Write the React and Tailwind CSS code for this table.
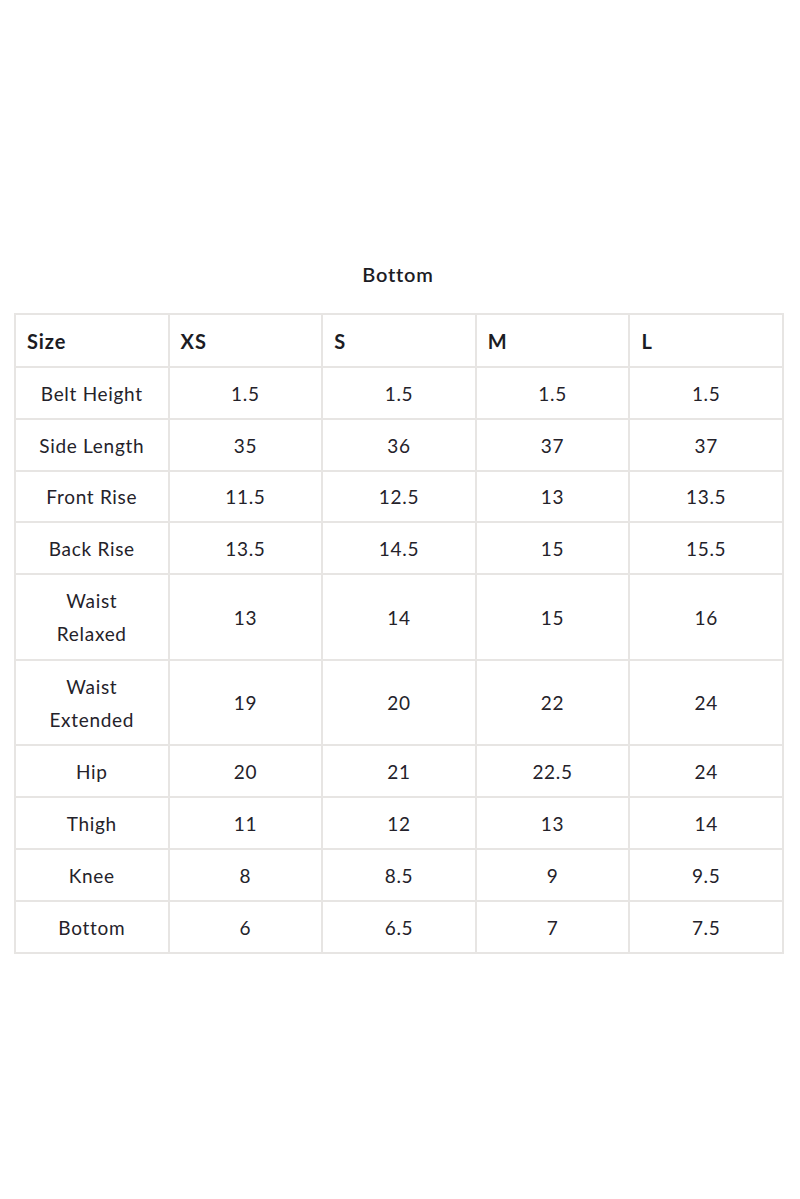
import React from "react";

const rows = [
  ["Belt Height", "1.5", "1.5", "1.5", "1.5"],
  ["Side Length", "35", "36", "37", "37"],
  ["Front Rise", "11.5", "12.5", "13", "13.5"],
  ["Back Rise", "13.5", "14.5", "15", "15.5"],
  [["Waist", "Relaxed"], "13", "14", "15", "16"],
  [["Waist", "Extended"], "19", "20", "22", "24"],
  ["Hip", "20", "21", "22.5", "24"],
  ["Thigh", "11", "12", "13", "14"],
  ["Knee", "8", "8.5", "9", "9.5"],
  ["Bottom", "6", "6.5", "7", "7.5"],
];

const heights = [
  "h-[52px]",
  "h-[52px]",
  "h-[51px]",
  "h-[52px]",
  "h-[86px]",
  "h-[85px]",
  "h-[52px]",
  "h-[52px]",
  "h-[52px]",
  "h-[52px]",
];

export default function App() {
  return (
    <div
      className="w-[800px] h-[1199px] bg-white text-[#1c1c24] pt-[261px]"
      style={{ fontFamily: "Lato, 'Open Sans', sans-serif" }}
    >
      <div className="text-center text-[20px] font-semibold tracking-[0.8px] leading-[26px] pr-[4px]">
        Bottom
      </div>
      <div className="mt-[26px] ml-[14px] w-[770px]">
        <table className="border-collapse w-[770px] table-fixed">
          <tbody>
            <tr className="h-[53px]">
              {["Size", "XS", "S", "M", "L"].map((h, i) => (
                <td
                  key={i}
                  className="border-2 border-[#e7e5e3] pl-[11px] text-left text-[20px] font-bold tracking-[0.9px] align-middle"
                >
                  {h}
                </td>
              ))}
            </tr>
            {rows.map((r, ri) => {
              return (
                <tr key={ri} className={heights[ri]}>
                  {r.map((c, ci) => (
                    <td
                      key={ci}
                      className="border-2 border-[#e7e5e3] text-center text-[19px] tracking-[0.7px] align-middle leading-[33px] text-[#24222a]"
                    >
                      {Array.isArray(c) ? (
                        <>
                          <div>{c[0]}</div>
                          <div>{c[1]}</div>
                        </>
                      ) : (
                        c
                      )}
                    </td>
                  ))}
                </tr>
              );
            })}
          </tbody>
        </table>
      </div>
    </div>
  );
}
